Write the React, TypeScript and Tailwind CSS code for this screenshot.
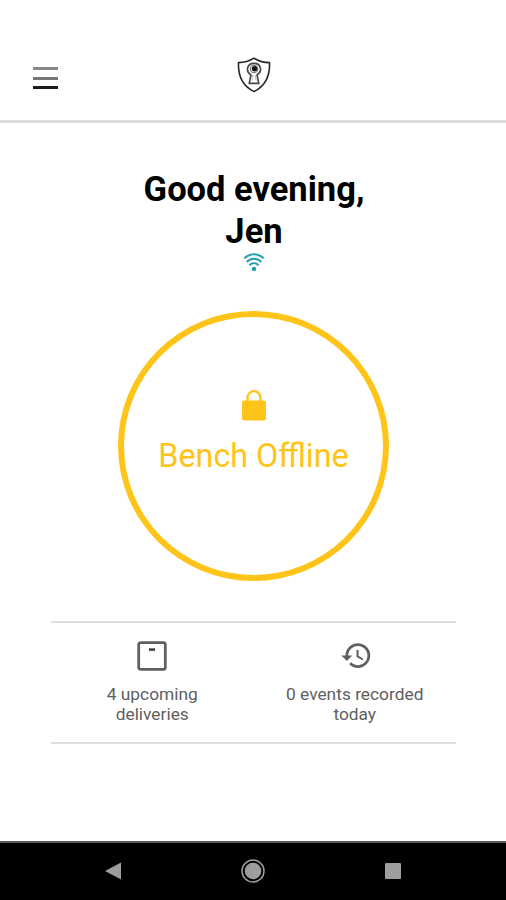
import React from 'react';

function Shield() {
  return (
    <svg className="h-[36px] w-[34px]" viewBox="0 0 34 36" fill="none">
      <path d="M17 1.2C12.4 4.2 7.2 5.6 1.5 5.6C1 17 3.6 28 17 34.6C30.4 28 33 17 32.5 5.6C26.8 5.6 21.6 4.2 17 1.2Z" stroke="#252525" strokeWidth="1.6" strokeLinejoin="round" />
      <path d="M14 18C8.4 14.8 9.6 6.4 17 6.4C24.4 6.4 25.6 14.8 20 18L21.8 26.4H12.2Z" stroke="#444" strokeWidth="1.6" strokeLinejoin="round" />
      <circle cx="17" cy="12" r="3.8" stroke="#666" strokeWidth="1" />
      <circle cx="17.5" cy="11.8" r="2.7" fill="#111" />
      <path d="M15.9 18L15 23.6M18.2 18L19 23.6" stroke="#aaa" strokeWidth=".8" />
    </svg>
  );
}

function Header() {
  return (
    <header className="grid h-[123px] grid-cols-3 border-b-[3px] border-[#dadada] pt-[57px]">
      <button aria-label="Menu" className="mt-[10px] ml-[33px] flex h-[22px] w-[25px] flex-col justify-between self-start">
        <span className="h-[3px] w-full bg-[#888]" />
        <span className="h-[3px] w-full bg-[#777]" />
        <span className="h-[3px] w-full bg-[#1c1c1c]" />
      </button>
      <div className="flex justify-center pl-[2px]">
        <Shield />
      </div>
    </header>
  );
}

function Stat({ icon, lines }: { icon: React.ReactNode; lines: string[] }) {
  return (
    <div className="flex w-[203px] flex-col items-center text-center">
      <div className="flex h-[33px] items-center">{icon}</div>
      <p className="mt-[12px] text-[17.35px] leading-5 whitespace-nowrap text-[#606060]">
        {lines[0]}
        <br />
        {lines[1]}
      </p>
    </div>
  );
}

export default function App() {
  return (
    <div className="flex h-[900px] w-[506px] flex-col bg-white font-['Roboto',sans-serif]">
      <Header />
      <main className="flex flex-1 flex-col items-center pl-px">
        <h1 className="mt-[45px] pl-px text-center text-[34.5px] leading-[42px] font-bold text-black">
          Good evening,
          <br />
          Jen
        </h1>
        <svg className="h-[20px] w-[22px]" viewBox="0 0 22 20" fill="none" stroke="#249fb0" strokeWidth="2">
          <path d="M1.3 6.3C7 .8 15 .8 20.7 6.3M3.6 9.9C8 5.6 14 5.6 18.4 9.9M6.4 13.2C9.1 10.6 12.9 10.6 15.6 13.2" />
          <circle cx="11" cy="17" r="2.2" fill="#249fb0" stroke="none" />
        </svg>
        <section className="mt-[38.5px] flex h-[270px] w-[271px] flex-col items-center rounded-[50%] border-[6px] border-[#ffc41a] pt-[73px] text-[#ffc41a]">
          <svg className="h-[31px] w-[24px]" viewBox="0 0 24 31" fill="none">
            <rect y="10.5" width="24" height="20" rx="2" fill="currentColor" />
            <path d="M5.6 11V7.5a6.4 6.4 0 0 1 12.8 0V11" stroke="currentColor" strokeWidth="2.4" />
          </svg>
          <p className="mt-[15px] text-[32.3px] leading-[40px] whitespace-nowrap">Bench Offline</p>
        </section>
        <section className="mt-[40.5px] flex h-[123px] w-[405px] border-y-2 border-[#dedede] pt-[16px]">
          <Stat
            icon={
              <svg className="h-[30px] w-[30px]" viewBox="0 0 30 30" fill="none">
                <rect x="1.7" y="1.7" width="26.6" height="26.6" rx="1.8" stroke="#606060" strokeWidth="2.8" />
                <path d="M12 8.6h6" stroke="#444" strokeWidth="2.6" />
              </svg>
            }
            lines={['4 upcoming', 'deliveries']}
          />
          <Stat
            icon={
              <svg className="ml-[3px] h-[33px] w-[33px]" viewBox="0 0 24 24" fill="#606060">
                <path d="M13 3a9 9 0 0 0-9 9H1l3.89 3.89.07.14L9 12H6c0-3.87 3.13-7 7-7s7 3.13 7 7-3.13 7-7 7c-1.93 0-3.68-.79-4.94-2.06l-1.42 1.42A8.954 8.954 0 0 0 13 21a9 9 0 0 0 0-18zm-1 5v5l4.28 2.54.72-1.21-3.5-2.08V8H12z" />
              </svg>
            }
            lines={['0 events recorded', 'today']}
          />
        </section>
      </main>
      <nav className="flex h-[59px] items-center justify-between border-t-2 border-[#5c5c5c] bg-black px-[105px] pb-[2px]">
        <svg className="h-[18px] w-[16px]" viewBox="0 0 16 18">
          <path d="M0 9L16 .5v17Z" fill="#9d9d9d" />
        </svg>
        <svg className="h-[24px] w-[24px]" viewBox="0 0 24 24">
          <circle cx="12" cy="12" r="11" fill="none" stroke="#9d9d9d" strokeWidth="1.5" />
          <circle cx="12" cy="12" r="8.3" fill="#9d9d9d" />
        </svg>
        <span className="h-[16px] w-[16px] rounded-[1px] bg-[#9d9d9d]" />
      </nav>
    </div>
  );
}
